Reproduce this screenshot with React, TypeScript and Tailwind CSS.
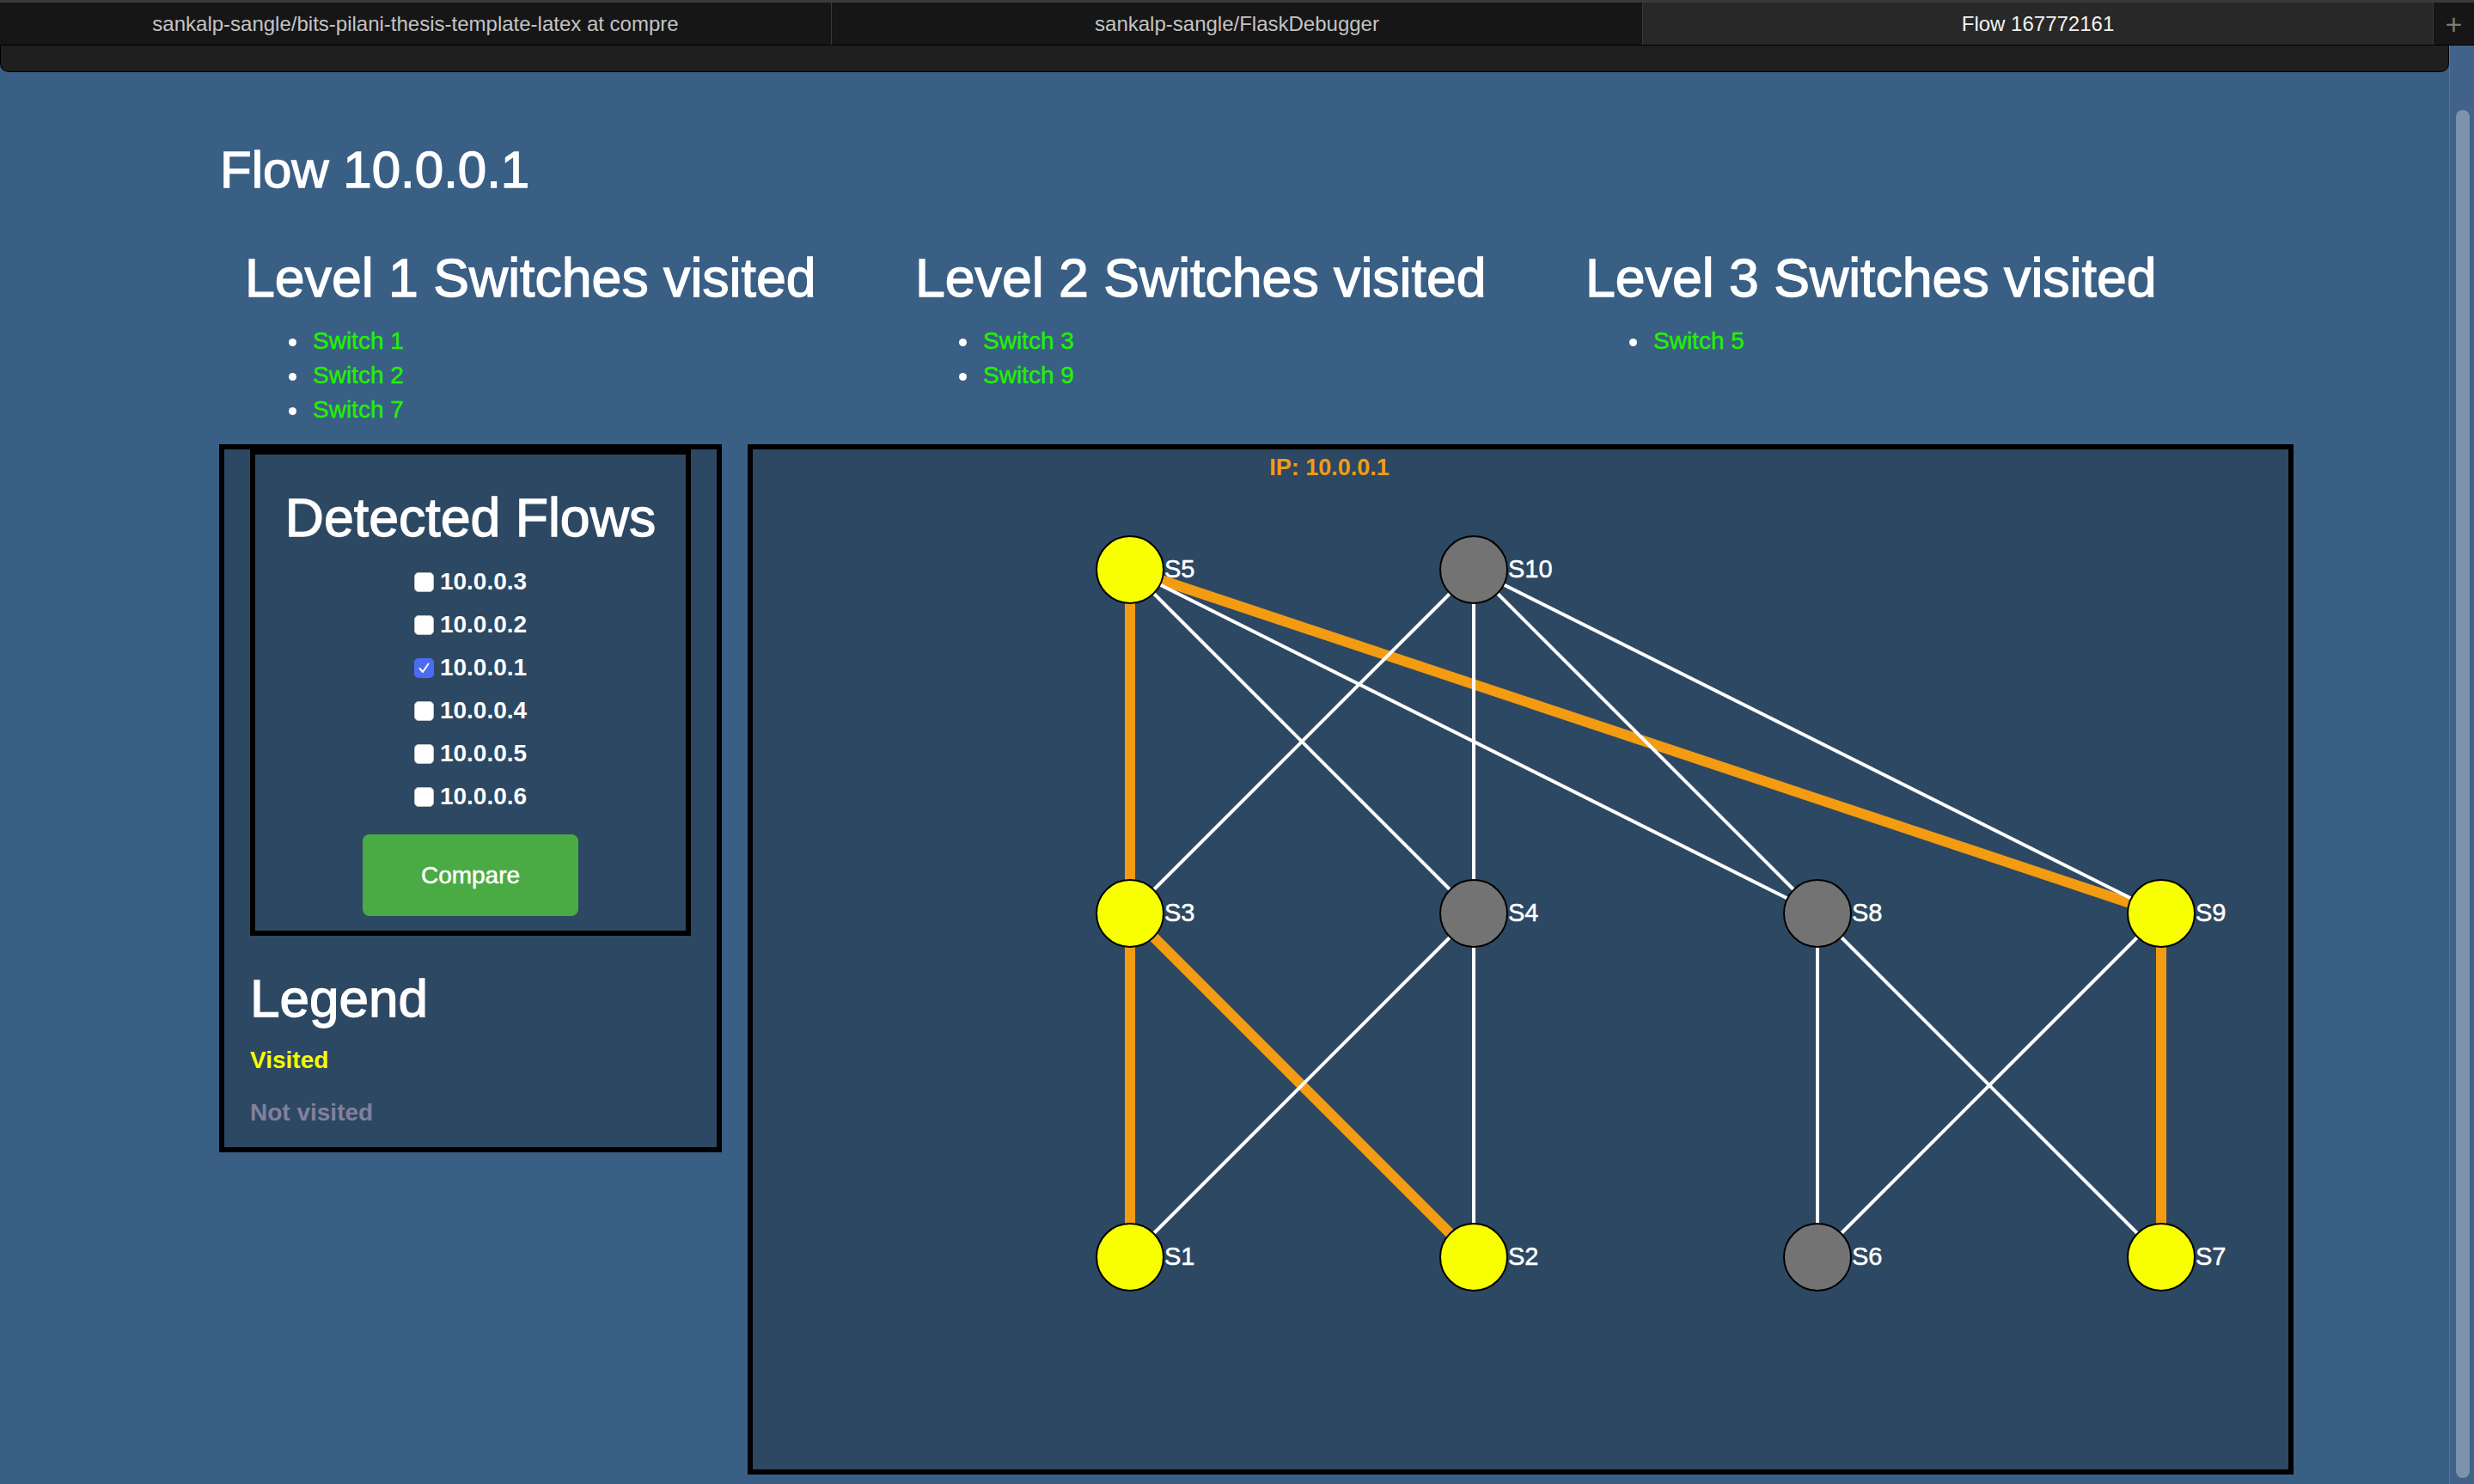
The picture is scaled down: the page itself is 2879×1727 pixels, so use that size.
import React from "react";

type Node = { id: string; x: number; y: number; visited: boolean };

const nodes: Node[] = [
  { id: "S5", x: 439, y: 140, visited: true },
  { id: "S10", x: 839, y: 140, visited: false },
  { id: "S3", x: 439, y: 540, visited: true },
  { id: "S4", x: 839, y: 540, visited: false },
  { id: "S8", x: 1239, y: 540, visited: false },
  { id: "S9", x: 1639, y: 540, visited: true },
  { id: "S1", x: 439, y: 940, visited: true },
  { id: "S2", x: 839, y: 940, visited: true },
  { id: "S6", x: 1239, y: 940, visited: false },
  { id: "S7", x: 1639, y: 940, visited: true },
];

const orangeEdges: [string, string][] = [
  ["S5", "S3"],
  ["S3", "S1"],
  ["S3", "S2"],
  ["S5", "S9"],
  ["S9", "S7"],
];

const whiteEdges: [string, string][] = [
  ["S5", "S4"],
  ["S5", "S8"],
  ["S10", "S3"],
  ["S10", "S4"],
  ["S10", "S8"],
  ["S10", "S9"],
  ["S4", "S1"],
  ["S4", "S2"],
  ["S8", "S6"],
  ["S8", "S7"],
  ["S9", "S6"],
];

const levels = [
  { title: "Level 1 Switches visited", items: ["Switch 1", "Switch 2", "Switch 7"] },
  { title: "Level 2 Switches visited", items: ["Switch 3", "Switch 9"] },
  { title: "Level 3 Switches visited", items: ["Switch 5"] },
];

const flows = [
  { ip: "10.0.0.3", checked: false },
  { ip: "10.0.0.2", checked: false },
  { ip: "10.0.0.1", checked: true },
  { ip: "10.0.0.4", checked: false },
  { ip: "10.0.0.5", checked: false },
  { ip: "10.0.0.6", checked: false },
];

function pos(id: string) {
  const n = nodes.find((v) => v.id === id)!;
  return n;
}

function Graph() {
  return (
    <svg width={1787} height={1187} viewBox="0 0 1787 1187" className="block">
      <text
        x={671}
        y={30}
        textAnchor="middle"
        fill="#f39c12"
        fontWeight="bold"
        fontSize={27}
        fontFamily="'Liberation Sans', Arial, sans-serif"
      >
        IP: 10.0.0.1
      </text>
      {orangeEdges.map(([a, b]) => {
        const p = pos(a);
        const q = pos(b);
        return <line key={a + b} x1={p.x} y1={p.y} x2={q.x} y2={q.y} stroke="#f39c12" strokeWidth={12} />;
      })}
      {whiteEdges.map(([a, b]) => {
        const p = pos(a);
        const q = pos(b);
        return <line key={a + b} x1={p.x} y1={p.y} x2={q.x} y2={q.y} stroke="#ffffff" strokeWidth={4} />;
      })}
      {nodes.map((n) => (
        <g key={n.id}>
          <circle cx={n.x} cy={n.y} r={39} fill={n.visited ? "#f7ff00" : "#737373"} stroke="#000" strokeWidth={2} />
          <text
            x={n.x + 40}
            y={n.y + 9}
            fill="#ffffff"
            stroke="#ffffff"
            strokeWidth={0.5}
            fontSize={29}
            fontFamily="'Liberation Sans', Arial, sans-serif"
          >
            {n.id}
          </text>
        </g>
      ))}
    </svg>
  );
}

function Checkbox({ checked }: { checked: boolean }) {
  if (checked) {
    return (
      <span className="w-[23px] h-[23px] rounded-[5px] bg-[#4a6cf4] flex items-center justify-center shrink-0">
        <svg width="15" height="15" viewBox="0 0 15 15">
          <path d="M2.5 8 L6 12 L12.5 2.5" fill="none" stroke="#ffffff" strokeWidth="2" strokeLinecap="round" strokeLinejoin="round" />
        </svg>
      </span>
    );
  }
  return <span className="w-[23px] h-[23px] rounded-[5px] bg-white border border-[#c4c4c4] shrink-0" />;
}

export default function App() {
  return (
    <div className="w-[2879px] h-[1727px] overflow-hidden bg-[#3a5f85] flex flex-col font-['Liberation_Sans',Arial,Helvetica,sans-serif]">
      {/* Tab bar */}
      <div className="h-[53px] shrink-0 flex bg-[#161616] border-t-[3px] border-t-[#3a3a3a] border-b border-b-black">
        <div className="w-[968px] border-r border-[#3a3a3a] flex items-center justify-center text-[24px] text-[#c4c4c4]">
          sankalp-sangle/bits-pilani-thesis-template-latex at compre
        </div>
        <div className="w-[944px] border-r border-[#3a3a3a] flex items-center justify-center text-[24px] text-[#c4c4c4]">
          sankalp-sangle/FlaskDebugger
        </div>
        <div className="w-[920px] border-r border-[#3a3a3a] bg-[#282828] flex items-center justify-center text-[24px] text-[#f2f2f2]">
          Flow 167772161
        </div>
        <div className="flex-1 flex items-center justify-center text-[#7a7a7a] text-[34px] font-light leading-none">
          +
        </div>
      </div>

      <div className="flex flex-1 min-h-0">
        <div className="w-[2850px] flex flex-col">
          {/* toolbar */}
          <div className="h-[31px] shrink-0 bg-[#1f1f1f] border-l border-r border-b border-black rounded-b-[10px]" />

          <main className="pl-[253px] pt-[79px] text-white">
            <h1 className="ml-[3px] text-[60px] leading-[70px] font-normal [-webkit-text-stroke-width:1.3px]">Flow 10.0.0.1</h1>

            <div className="flex ml-[32px] mt-[55px]">
              {levels.map((lv) => (
                <div key={lv.title} className="w-[780px]">
                  <h2 className="text-[62.6px] leading-[70px] font-normal [-webkit-text-stroke-width:1.3px]">{lv.title}</h2>
                  <ul className="mt-[19px] pl-[79px]">
                    {lv.items.map((it) => (
                      <li key={it} className="relative text-[28px] leading-[40px] text-[#22f200] [-webkit-text-stroke-width:0.4px]">
                        <span className="absolute left-[-28px] top-[17px] w-[9px] h-[9px] rounded-full bg-white" />
                        {it}
                      </li>
                    ))}
                  </ul>
                </div>
              ))}
            </div>

            <div className="flex gap-[30px] mt-[20px] ml-[2px] items-start">
              {/* left panel */}
              <div className="w-[585px] border-[6px] border-black bg-[#2d4862] px-[30px] pb-[20px]">
                <div className="border-[6px] border-black pt-[38px] pb-[17px] flex flex-col items-center">
                  <h2 className="text-[62.6px] leading-[70px] font-normal [-webkit-text-stroke-width:1.3px]">Detected Flows</h2>
                  <div className="mt-[15px] flex flex-col">
                    {flows.map((f) => (
                      <label key={f.ip} className="h-[50px] flex items-center gap-[7px]">
                        <Checkbox checked={f.checked} />
                        <span className="text-[28px] font-bold leading-none">{f.ip}</span>
                      </label>
                    ))}
                  </div>
                  <button className="mt-[19px] w-[251px] h-[95px] rounded-[8px] bg-[#4aab45] text-white text-[28px] [-webkit-text-stroke-width:0.5px]">
                    Compare
                  </button>
                </div>
                <h2 className="mt-[38px] text-[62px] leading-[70px] font-normal [-webkit-text-stroke-width:1.3px]">Legend</h2>
                <p className="mt-[17px] text-[28px] leading-[40px] font-bold text-[#f7ff00]">Visited</p>
                <p className="mt-[21px] text-[28px] leading-[40px] font-bold text-[#83809e]">Not visited</p>
              </div>

              {/* graph */}
              <div className="w-[1799px] h-[1199px] border-[6px] border-black bg-[#2d4862]">
                <Graph />
              </div>
            </div>
          </main>
        </div>

        {/* scrollbar */}
        <div className="w-[29px] bg-[#41638a] border-l border-[#557799] pt-[75px] pl-[7px]">
          <div className="w-[16px] h-[1592px] rounded-full bg-[#7c93ad]" />
        </div>
      </div>
    </div>
  );
}
